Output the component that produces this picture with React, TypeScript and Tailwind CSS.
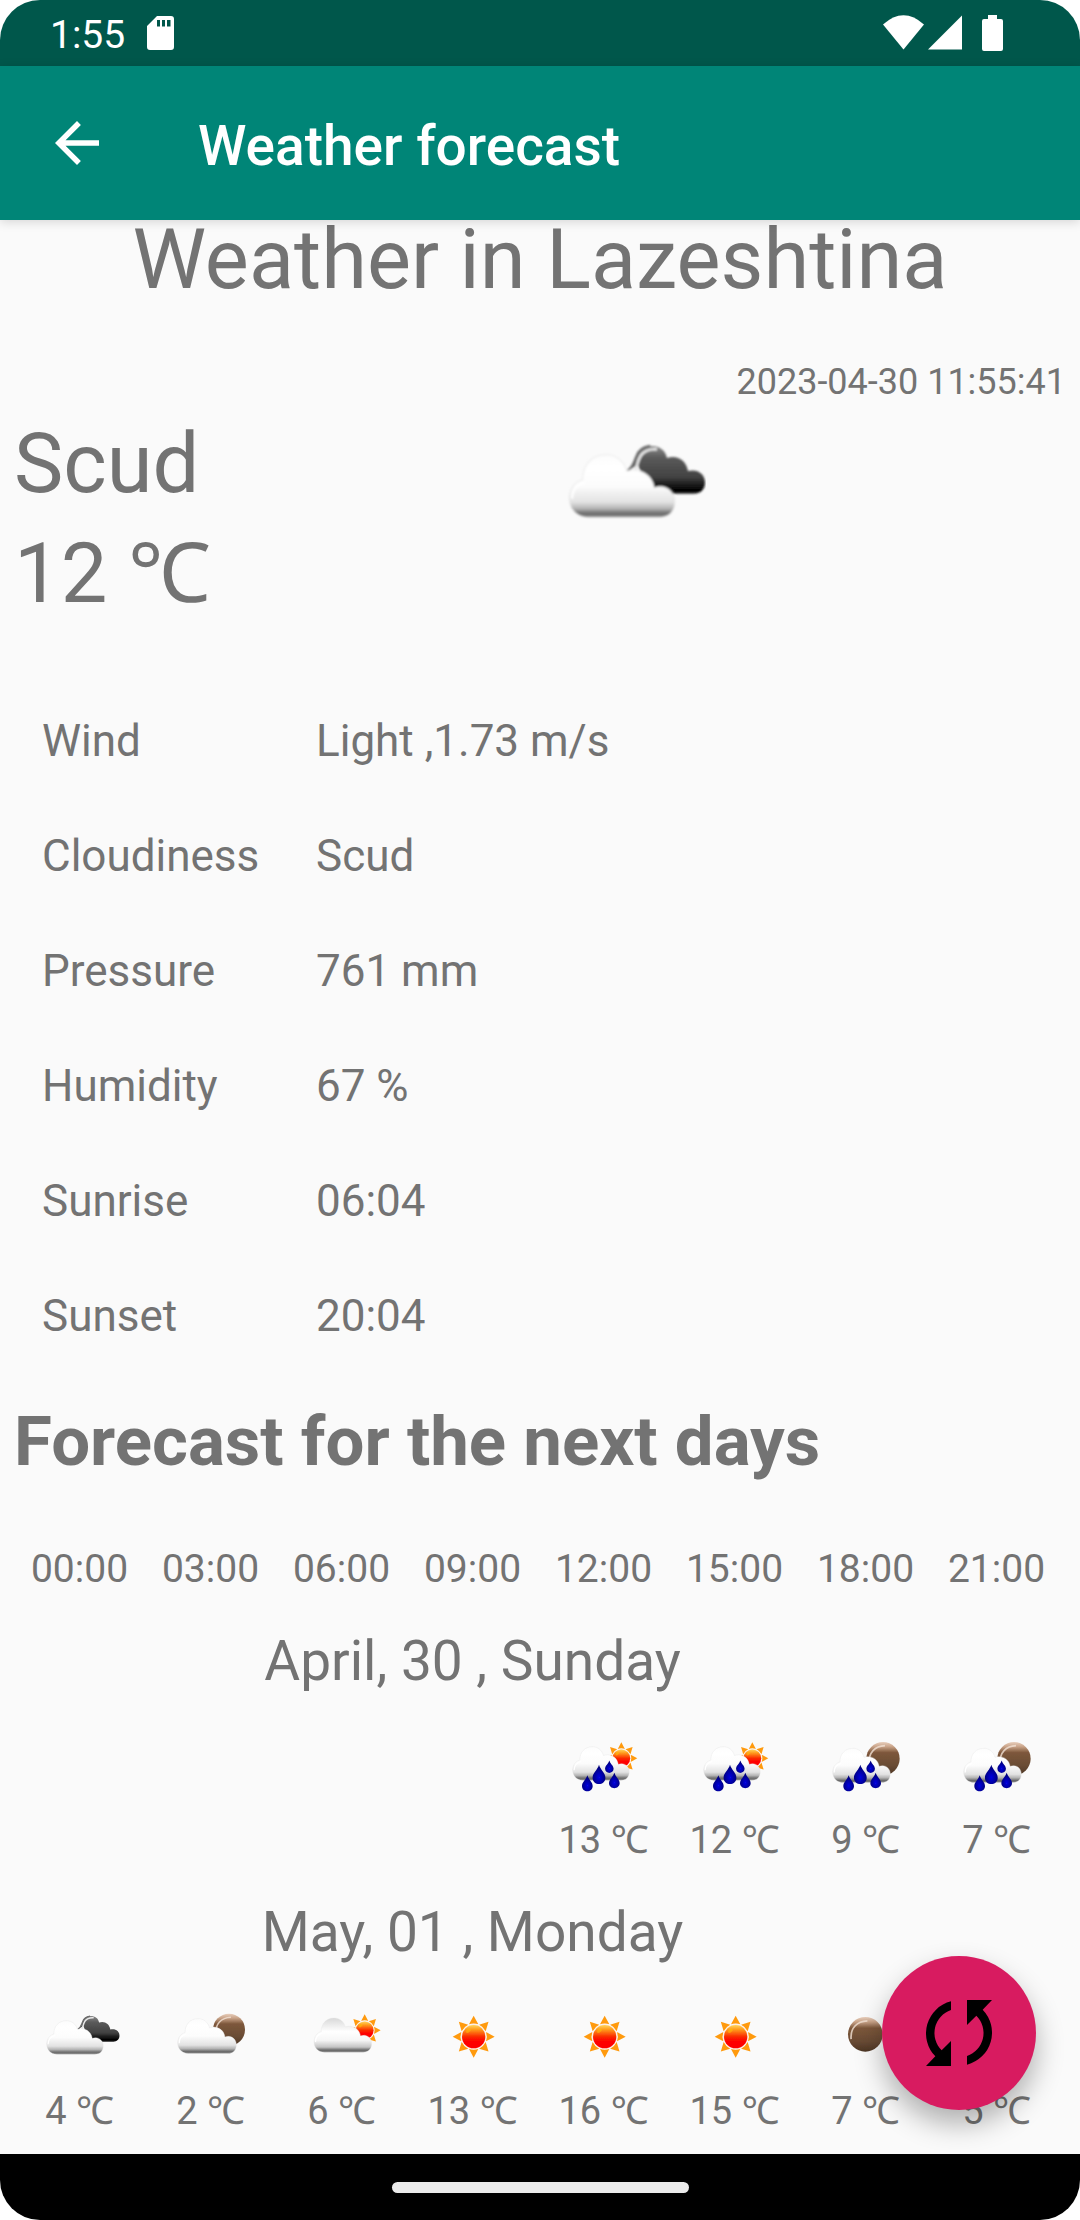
import type { ReactNode } from "react";

type Sky = "none" | "scud" | "moonCloud" | "sunCloud" | "sun" | "moon" | "sunRain" | "moonRain";

const details: [string, string][] = [
  ["Wind", "Light ,1.73 m/s"],
  ["Cloudiness", "Scud"],
  ["Pressure", "761 mm"],
  ["Humidity", "67 %"],
  ["Sunrise", "06:04"],
  ["Sunset", "20:04"],
];

const hours = ["00:00", "03:00", "06:00", "09:00", "12:00", "15:00", "18:00", "21:00"];

const days: { title: string; slots: [Sky, string][] }[] = [
  {
    title: "April, 30 , Sunday",
    slots: [
      ["none", ""],
      ["none", ""],
      ["none", ""],
      ["none", ""],
      ["sunRain", "13 ℃"],
      ["sunRain", "12 ℃"],
      ["moonRain", "9 ℃"],
      ["moonRain", "7 ℃"],
    ],
  },
  {
    title: "May, 01 , Monday",
    slots: [
      ["scud", "4 ℃"],
      ["moonCloud", "2 ℃"],
      ["sunCloud", "6 ℃"],
      ["sun", "13 ℃"],
      ["sun", "16 ℃"],
      ["sun", "15 ℃"],
      ["moon", "7 ℃"],
      ["moon", "5 ℃"],
    ],
  },
];

const CLOUD =
  "M58 190C23 190 0 165 0 132C0 102 18 82 40 76C40 32 68 0 111 0C143 0 166 20 174 50C208 37 253 57 258 100C293 87 320 112 320 142C320 172 303 190 273 190Z";
const RAYS = [0, 45, 90, 135, 180, 225, 270, 315];

function Gradients() {
  return (
    <svg className="absolute size-0" aria-hidden="true">
      <defs>
        <linearGradient id="white" x1="0" y1="0" x2="0" y2="1">
          <stop offset="0" stopColor="#fcfcfc" />
          <stop offset="0.2" stopColor="#ffffff" />
          <stop offset="0.5" stopColor="#fcfcfc" />
          <stop offset="0.76" stopColor="#e2e2e2" />
          <stop offset="0.86" stopColor="#b4b4b4" />
          <stop offset="0.94" stopColor="#6c6c6c" />
          <stop offset="1" stopColor="#808080" />
        </linearGradient>
        <linearGradient id="shaded" x1="0" y1="0" x2="0" y2="1">
          <stop offset="0" stopColor="#d8d8d8" />
          <stop offset="0.4" stopColor="#ffffff" />
          <stop offset="0.65" stopColor="#f6f6f6" />
          <stop offset="0.85" stopColor="#c4c4c4" />
          <stop offset="0.94" stopColor="#686868" />
          <stop offset="1" stopColor="#808080" />
        </linearGradient>
        <linearGradient id="dark" x1="0" y1="0" x2="0" y2="1">
          <stop offset="0" stopColor="#8a8a8a" />
          <stop offset="0.25" stopColor="#5a5a5a" />
          <stop offset="0.65" stopColor="#424242" />
          <stop offset="0.92" stopColor="#000000" />
          <stop offset="1" stopColor="#222222" />
        </linearGradient>
        <linearGradient id="moonFill" x1="0" y1="0" x2="0" y2="1">
          <stop offset="0" stopColor="#e8cfbd" />
          <stop offset="0.14" stopColor="#c9a388" />
          <stop offset="0.32" stopColor="#7d573b" />
          <stop offset="0.7" stopColor="#6a4c35" />
          <stop offset="1" stopColor="#4c3524" />
        </linearGradient>
        <linearGradient id="sunFill" x1="0" y1="0" x2="0" y2="1">
          <stop offset="0" stopColor="#ffd75c" />
          <stop offset="0.2" stopColor="#ff9a1c" />
          <stop offset="0.5" stopColor="#fb2a00" />
          <stop offset="0.7" stopColor="#ff0000" />
          <stop offset="1" stopColor="#fb0505" />
        </linearGradient>
        <radialGradient id="dropFill" cx="0.5" cy="0.65" r="0.5">
          <stop offset="0" stopColor="#0707e0" />
          <stop offset="1" stopColor="#000080" />
        </radialGradient>
        <filter id="soft" x="-10%" y="-10%" width="120%" height="120%">
          <feGaussianBlur stdDeviation="2" />
        </filter>
      </defs>
    </svg>
  );
}

function Cloud({ x, y, s, fill = "url(#white)" }: { x: number; y: number; s: number; fill?: string }) {
  return (
    <g transform={`translate(${x} ${y}) scale(${s})`}>
      <path d={CLOUD} fill={fill} stroke="#e4e4e4" strokeOpacity="0.5" strokeWidth="4" />
      <path d="M8 134C8 106 24 90 47 84" fill="none" stroke="#ffffff" strokeWidth="7" />
    </g>
  );
}

function DarkCloud() {
  return (
    <g transform="translate(137 122) scale(0.538)">
      <path
        d="M174 48C190 40 196 20 200 7C207 -16 223 -26 246 -26C270 -26 288 -13 292 10C323 0 350 17 355 49C383 42 406 57 406 84C406 105 390 117 373 117L240 117L205 30Z"
        fill="url(#dark)"
      />
      <path d="M188 58C204 46 200 22 214 2C224 -12 240 -18 262 -16" fill="none" stroke="#e8e8e8" strokeWidth="8" />
      <path d="M174 48C190 40 194 20 200 7C206 -12 222 -24 242 -26" fill="none" stroke="#6a6a6a" strokeWidth="7" />
    </g>
  );
}

function Moon({ x, y, r }: { x: number; y: number; r: number }) {
  return (
    <g transform={`translate(${x} ${y}) scale(${r / 50})`}>
      <circle r="50" fill="url(#moonFill)" />
      <path d="M-41 14C-44 -18 -24 -38 6 -39" fill="none" stroke="#f3e2d6" strokeOpacity="0.8" strokeWidth="5" />
    </g>
  );
}

function Sun({ x, y, s }: { x: number; y: number; s: number }) {
  return (
    <g transform={`translate(${x} ${y}) scale(${s})`}>
      {RAYS.map((a) => (
        <path key={a} d="M0 -63L14 -37Q0 -42 -14 -37Z" fill="#ff9a10" transform={`rotate(${a})`} />
      ))}
      <circle r="37" fill="#ffe9dd" />
      <circle r="35" fill="url(#sunFill)" />
      <ellipse cx="-16" cy="-18" rx="8" ry="5" fill="#ffc400" opacity="0.5" transform="rotate(-40 -16 -18)" />
    </g>
  );
}

function Drop({ x, y, w, h }: { x: number; y: number; w: number; h: number }) {
  return (
    <g transform={`translate(${x} ${y}) scale(${w / 30} ${h / 45})`}>
      <path d="M0 -2C3 10 16 18 16 30C16 40 8 46 0 46C-8 46 -16 40 -16 30C-16 18 -3 10 0 -2Z" fill="url(#dropFill)" />
    </g>
  );
}

function Drops({ x }: { x: number }) {
  return (
    <>
      <Drop x={x} y={170} w={36} h={54} />
      <Drop x={x + 31} y={156} w={24} h={35} />
      <Drop x={x - 35} y={201} w={30} h={45} />
      <Drop x={x + 46} y={193} w={30} h={44} />
    </>
  );
}

const drawings: Record<Sky, ReactNode> = {
  none: null,
  scud: (
    <>
      <DarkCloud />
      <Cloud x={137} y={122} s={0.53} />
    </>
  ),
  moonCloud: (
    <>
      <Moon x={291} y={149} r={48} />
      <Cloud x={137} y={116} s={0.55} />
    </>
  ),
  sunCloud: (
    <>
      <Sun x={305} y={151} s={0.76} />
      <Cloud x={153} y={114} s={0.54} fill="url(#shaded)" />
    </>
  ),
  sun: <Sun x={239} y={170} s={1} />,
  moon: <Moon x={235} y={163} r={52} />,
  sunRain: (
    <>
      <Sun x={289} y={148} s={0.76} />
      <Cloud x={143} y={113} s={0.53} />
      <Drops x={222} />
    </>
  ),
  moonRain: (
    <>
      <Moon x={288} y={149} r={50} />
      <Cloud x={137} y={118} s={0.54} />
      <Drops x={220} />
    </>
  ),
};

function SkyIcon({ sky, className }: { sky: Sky; className: string }) {
  return (
    <svg viewBox="117 84 240 180" className={className} aria-hidden="true">
      <g filter="url(#soft)">{drawings[sky]}</g>
    </svg>
  );
}

function StatusBar() {
  return (
    <div className="flex h-[66px] items-center justify-between bg-[#00574b] pr-[77px] pl-[50px] text-white">
      <div className="flex items-center gap-[22px]">
        <span className="pt-1 text-[39px] leading-[46px]">1:55</span>
        <svg viewBox="0 0 27 34" className="h-[34px] w-[27px]" fill="currentColor" aria-hidden="true">
          <path
            fillRule="evenodd"
            d="M10 0H24Q27 0 27 3V31Q27 34 24 34H3Q0 34 0 31V10ZM10 4V10.500H13V4ZM15 4V10.500H18V4ZM20 4V10.500H23.500V4Z"
          />
        </svg>
      </div>
      <svg viewBox="0 0 120 36" className="h-9 w-[120px]" fill="currentColor" aria-hidden="true">
        <path d="M0 9.500Q20.500 -9 41 9.500L20.500 34.500Z" />
        <path d="M79 0.500V34.500H45Z" />
        <path d="M105 0H114V4H118Q120 4 120 6V34Q120 36 118 36H101Q99 36 99 34V6Q99 4 101 4H105Z" />
      </svg>
    </div>
  );
}

export default function App() {
  return (
    <div className="min-h-screen bg-white">
      <div
        className="relative flex min-h-screen flex-col overflow-hidden rounded-[40px] bg-[#fafafa] text-[#737373]"
        style={{ fontFamily: 'Roboto, "Noto Sans", "Noto Sans CJK SC", sans-serif' }}
      >
        <Gradients />
        <StatusBar />
        <header className="relative z-10 flex h-[154px] items-center gap-[88px] bg-[#008577] pl-11 text-white shadow-[0_2px_10px_rgba(0,0,0,0.15)]">
          <button type="button" aria-label="Back">
            <svg viewBox="0 0 24 24" className="size-[66px]" fill="currentColor" aria-hidden="true">
              <path d="M20 11H7.830l5.590-5.590L12 4l-8 8 8 8 1.410-1.410L7.830 13H20v-2z" />
            </svg>
          </button>
          <h1 className="pt-1.5 text-[55px] leading-[66px] font-medium">Weather forecast</h1>
        </header>

        <main className="relative flex-1 pb-5">
          <h2 className="text-center text-[83px] leading-[80px]">Weather in Lazeshtina</h2>
          <p className="mt-[60px] pr-3.5 text-right text-[36px] leading-[44px]">2023-04-30 11:55:41</p>

          <section className="mt-[5px] flex pl-3.5 text-[83px] leading-[110px]">
            <div>
              <p>Scud</p>
              <p>12 ℃</p>
            </div>
            <div className="flex flex-1 items-start justify-center pt-[22px] pr-7">
              <SkyIcon sky="scud" className="h-[112px] w-[149px]" />
            </div>
          </section>

          <table className="mt-[54px] w-full text-left text-[44px]">
            <tbody>
              {details.map(([name, value]) => (
                <tr key={name} className="h-[115px]">
                  <th scope="row" className="w-[316px] pl-[42px] font-normal">
                    {name}
                  </th>
                  <td>{value}</td>
                </tr>
              ))}
            </tbody>
          </table>

          <h2 className="mt-7 pl-3.5 text-[69px] leading-[82px] font-bold">Forecast for the next days</h2>

          <div className="mt-[63px] pr-[18px] pl-3.5">
            <table className="w-full table-fixed text-center text-[39px] leading-[46px]">
              <thead>
                <tr>
                  {hours.map((hour) => (
                    <th key={hour} scope="col" className="font-normal">
                      {hour}
                    </th>
                  ))}
                </tr>
              </thead>
              {days.map((day) => (
                <tbody key={day.title}>
                  <tr>
                    <th colSpan={7} className="pt-9 text-[55px] leading-[66px] font-normal">
                      {day.title}
                    </th>
                  </tr>
                  <tr>
                    {day.slots.map(([sky, temp], i) => (
                      <td key={hours[i]} className="pt-[43px] align-top text-[38px] whitespace-nowrap">
                        <SkyIcon sky={sky} className="mx-auto mb-5 h-[60px] w-20" />
                        {temp}
                      </td>
                    ))}
                  </tr>
                </tbody>
              ))}
            </table>
          </div>

          <button
            type="button"
            aria-label="Refresh"
            className="absolute right-11 bottom-11 flex size-[154px] items-center justify-center rounded-full bg-[#d81b60] text-black shadow-[0_14px_28px_rgba(0,0,0,0.3)]"
          >
            <svg viewBox="378 240 198 198" className="size-[66px]" fill="currentColor" aria-hidden="true">
              <path d="M453 244A99 99 0 0 0 406 409L378 438H453V363L425 391A73 73 0 0 1 453 270Z" />
              <path
                d="M453 244A99 99 0 0 0 406 409L378 438H453V363L425 391A73 73 0 0 1 453 270Z"
                transform="rotate(180 477 339)"
              />
            </svg>
          </button>
        </main>

        <footer className="flex h-[66px] items-center justify-center bg-black">
          <div className="h-[11px] w-[297px] rounded-full bg-[#ebebeb]" />
        </footer>
      </div>
    </div>
  );
}
